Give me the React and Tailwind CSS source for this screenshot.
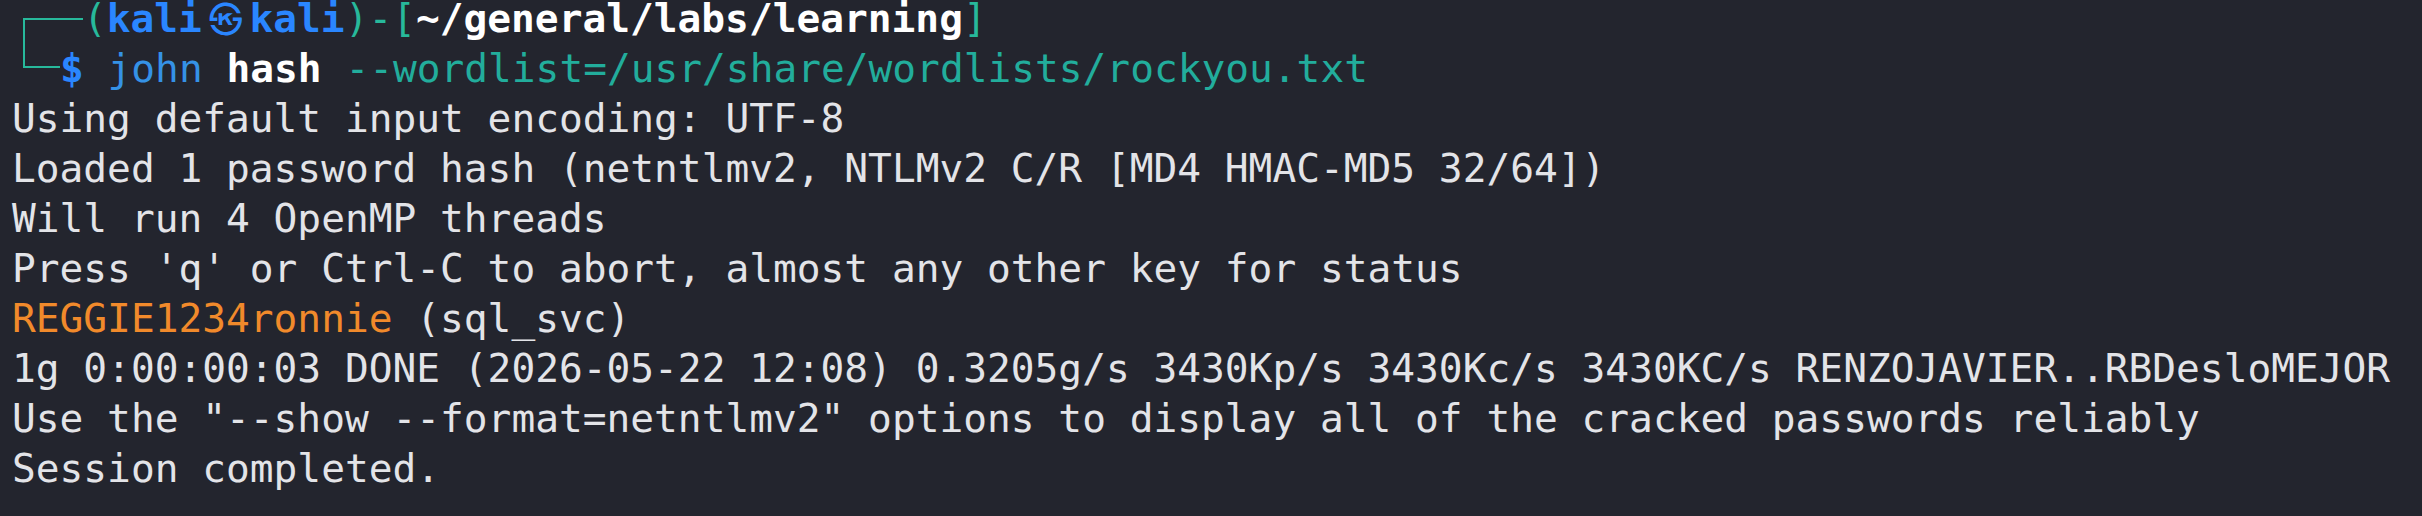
import React from 'react';

// kali zsh prompt + john output, one row per terminal line
const Line = ({ children, className = 'h-[50px] leading-[50px]' }) => (
  <div className={`flex items-center whitespace-pre ${className}`}>{children}</div>
);

const output = [
  { text: 'Using default input encoding: UTF-8' },
  { text: 'Loaded 1 password hash (netntlmv2, NTLMv2 C/R [MD4 HMAC-MD5 32/64])' },
  { text: 'Will run 4 OpenMP threads' },
  { text: "Press 'q' or Ctrl-C to abort, almost any other key for status" },
  { text: 'REGGIE1234ronnie (sql_svc)', hit: true },
  { text: '1g 0:00:00:03 DONE (2026-05-22 12:08) 0.3205g/s 3430Kp/s 3430Kc/s 3430KC/s RENZOJAVIER..RBDesloMEJOR' },
  { text: 'Use the "--show --format=netntlmv2" options to display all of the cracked passwords reliably' },
  { text: 'Session completed.' },
];

export default function App() {
  return (
    <div className="w-[2422px] h-[516px] overflow-hidden bg-[#23252e] text-[#e3e4e8] font-['DejaVu_Sans_Mono',monospace] text-[39.5px]">
      <div className="pl-[12px]">
        <Line className="h-[36px] leading-[36px]">
          <div className="self-end ml-[11px] w-[60px] h-[18px] border-l-2 border-t-2 border-[#27b99b]" />
          <span className="text-[#27b99b]">(</span>
          <span className="font-bold text-[#2a86ff]">kali</span>
          <span className="inline-block w-[47.6px] text-center font-bold text-[#2a86ff] font-['Noto_Sans_CJK_KR',sans-serif] text-[34px]">㉿</span>
          <span className="font-bold text-[#2a86ff]">kali</span>
          <span className="text-[#27b99b]">)-[</span>
          <span className="font-bold text-white">~/general/labs/learning</span>
          <span className="text-[#27b99b]">]</span>
        </Line>
        <Line className="mt-[7px] h-[50px] leading-[50px]">
          <div className="self-start -mt-[7px] ml-[11px] w-[37px] h-[32px] border-l-2 border-b-2 border-[#27b99b]" />
          <span className="font-bold text-[#2a86ff]">$</span>
          <span> </span>
          <span className="text-[#3592e6]">john</span>
          <span> </span>
          <span className="font-bold text-white">hash</span>
          <span> </span>
          <span className="text-[#22ad9c]">--wordlist=/usr/share/wordlists/rockyou.txt</span>
        </Line>
        {output.map((l, i) => (
          <Line key={i}>
            <span className={l.hit ? 'text-[#f18a2b]' : ''}>{l.hit ? 'REGGIE1234ronnie' : l.text}</span>
            {l.hit && <span> (sql_svc)</span>}
          </Line>
        ))}
      </div>
    </div>
  );
}
